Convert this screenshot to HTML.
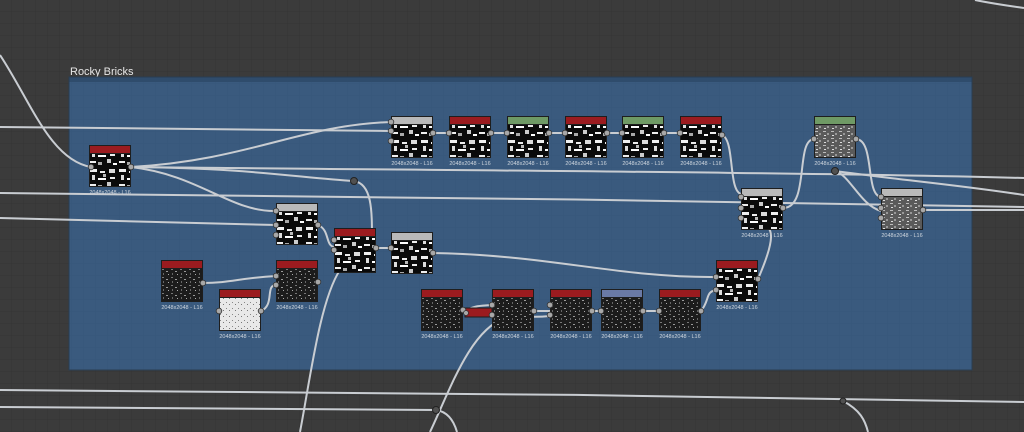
<!DOCTYPE html>
<html><head><meta charset="utf-8"><style>
html,body{margin:0;padding:0;width:1024px;height:432px;overflow:hidden;background:#3b3b3b}
svg{display:block}
text{font-family:"Liberation Sans",sans-serif}
</style></head><body>
<svg width="1024" height="432" viewBox="0 0 1024 432" xmlns="http://www.w3.org/2000/svg">
<defs>
<pattern id="grid" width="12" height="12" patternUnits="userSpaceOnUse"><path d="M12 0V12H0" fill="none" stroke="#343434" stroke-width="1"/></pattern>
<pattern id="grid2" width="12" height="12" patternUnits="userSpaceOnUse"><path d="M12 0V12H0" fill="none" stroke="#36577a" stroke-width="1"/></pattern>
<pattern id="bw" width="29" height="23" patternUnits="userSpaceOnUse"><rect width="29" height="23" fill="#0a0a0a"/><rect x="1" y="1" width="7" height="3" fill="#f0f0f0"/><rect x="11" y="3" width="5" height="2" fill="#eee"/><rect x="20" y="1" width="6" height="4" fill="#ddd"/><rect x="3" y="7" width="3" height="5" fill="#ddd"/><rect x="9" y="10" width="8" height="2" fill="#fff"/><rect x="14" y="6" width="3" height="3" fill="#bbb"/><rect x="21" y="9" width="5" height="2" fill="#eee"/><rect x="18" y="14" width="4" height="4" fill="#ccc"/><rect x="1" y="16" width="6" height="2" fill="#eee"/><rect x="9" y="17" width="4" height="3" fill="#aaa"/><rect x="24" y="18" width="4" height="2" fill="#fff"/></pattern>
<pattern id="dk" width="9" height="8" patternUnits="userSpaceOnUse"><rect width="9" height="8" fill="#1c1c1c"/><rect x="1" y="1" width="2" height="1" fill="#777"/><rect x="5" y="3" width="2" height="1" fill="#999"/><rect x="2" y="5" width="1" height="2" fill="#666"/><rect x="7" y="6" width="1" height="1" fill="#aaa"/></pattern>
<pattern id="gr" width="8" height="7" patternUnits="userSpaceOnUse"><rect width="8" height="7" fill="#5a5a5a"/><rect x="1" y="1" width="3" height="1" fill="#bbb"/><rect x="5" y="3" width="2" height="2" fill="#999"/><rect x="2" y="5" width="2" height="1" fill="#ddd"/></pattern>
<pattern id="wh" width="6" height="6" patternUnits="userSpaceOnUse"><rect width="6" height="6" fill="#e8e8e8"/><rect x="1" y="1" width="1" height="1" fill="#888"/><rect x="4" y="3" width="1" height="1" fill="#777"/></pattern>
</defs>
<rect width="1024" height="432" fill="#3b3b3b"/>
<rect width="1024" height="432" fill="url(#grid)"/>
<text x="70" y="75" font-size="11" fill="#e6e6e6">Rocky Bricks</text>
<rect x="69" y="77" width="903" height="293" fill="#3a5a7e"/>
<rect x="69" y="77" width="903" height="293" fill="url(#grid2)"/>
<rect x="69" y="77" width="903" height="5" fill="#2f4c6c"/>
<rect x="69" y="77" width="903" height="293" fill="none" stroke="#2a3d52" stroke-width="1"/>

<g fill="none" stroke="#c9cdd2" stroke-width="2">
<path d="M0 55C30 100 50 160 91 167"/>
<path d="M0 127L391 131"/>
<path d="M0 193C300 195 700 201 1024 207"/>
<path d="M0 218L276 225"/>
<path d="M131 167C250 160 300 125 391 122"/>
<path d="M131 167C400 170 800 172 1024 178"/>
<path d="M131 167C250 168 300 178 354 181C372 184 372 210 372 240"/>
<path d="M131 167C200 175 230 212 276 211"/>
<path d="M433 133H449M491 133H507M549 133H565M607 133H622M664 133H680"/>
<path d="M722 135C735 140 728 190 741 194"/>
<path d="M783 208C810 208 795 140 814 139"/>
<path d="M856 139C875 140 865 195 881 197"/>
<path d="M835 171C850 175 860 205 881 211"/>
<path d="M835 171C900 180 960 185 1024 195"/>
<path d="M923 210H1024"/>
<path d="M318 225C330 230 325 245 334 247"/>
<path d="M203 283C230 283 240 278 276 276"/>
<path d="M261 311C275 305 265 285 276 285"/>
<path d="M376 248H391"/>
<path d="M433 253C550 255 620 278 716 277"/>
<path d="M758 279C775 240 775 225 760 225"/>
<path d="M463 312C475 305 480 306 492 305"/>
<path d="M534 311H550M592 311H601M643 311H659"/>
<path d="M701 311C710 300 705 292 716 290"/>
<path d="M510 316C530 316 530 318 550 316"/>
<path d="M300 432C310 380 320 300 340 270"/>
<path d="M430 432C450 390 470 330 505 318"/>
<path d="M0 390C300 392 700 395 1024 402"/>
<path d="M0 407L436 410C450 412 455 425 457 432"/>
<path d="M843 401C860 410 865 420 868 432"/>
<path d="M975 0C995 4 1010 6 1024 8"/>
</g>
<g fill="#505050" stroke="#222" stroke-width="1">
<circle cx="354" cy="181" r="3.5"/><circle cx="835" cy="171" r="3.5"/><circle cx="436" cy="410" r="3.5"/><circle cx="843" cy="401" r="3"/>
</g>

<g font-size="5.5" fill="#cfd6de" text-anchor="middle">
<g transform="translate(89,145)"><rect width="42" height="42" fill="#1e1e1e"/><rect x="1" y="1" width="40" height="7" fill="#9b1b1f"/><rect x="1" y="9" width="40" height="32" fill="url(#bw)"/><text x="21" y="49">2048x2048 - L16</text></g>
<g transform="translate(391,116)"><rect width="42" height="42" fill="#1e1e1e"/><rect x="1" y="1" width="40" height="7" fill="#b9b9b9"/><rect x="1" y="9" width="40" height="32" fill="url(#bw)"/><text x="21" y="49">2048x2048 - L16</text></g>
<g transform="translate(449,116)"><rect width="42" height="42" fill="#1e1e1e"/><rect x="1" y="1" width="40" height="7" fill="#9b1b1f"/><rect x="1" y="9" width="40" height="32" fill="url(#bw)"/><text x="21" y="49">2048x2048 - L16</text></g>
<g transform="translate(507,116)"><rect width="42" height="42" fill="#1e1e1e"/><rect x="1" y="1" width="40" height="7" fill="#6f9a65"/><rect x="1" y="9" width="40" height="32" fill="url(#bw)"/><text x="21" y="49">2048x2048 - L16</text></g>
<g transform="translate(565,116)"><rect width="42" height="42" fill="#1e1e1e"/><rect x="1" y="1" width="40" height="7" fill="#9b1b1f"/><rect x="1" y="9" width="40" height="32" fill="url(#bw)"/><text x="21" y="49">2048x2048 - L16</text></g>
<g transform="translate(622,116)"><rect width="42" height="42" fill="#1e1e1e"/><rect x="1" y="1" width="40" height="7" fill="#6f9a65"/><rect x="1" y="9" width="40" height="32" fill="url(#bw)"/><text x="21" y="49">2048x2048 - L16</text></g>
<g transform="translate(680,116)"><rect width="42" height="42" fill="#1e1e1e"/><rect x="1" y="1" width="40" height="7" fill="#9b1b1f"/><rect x="1" y="9" width="40" height="32" fill="url(#bw)"/><text x="21" y="49">2048x2048 - L16</text></g>
<g transform="translate(814,116)"><rect width="42" height="42" fill="#1e1e1e"/><rect x="1" y="1" width="40" height="7" fill="#6f9a65"/><rect x="1" y="9" width="40" height="32" fill="url(#gr)"/><text x="21" y="49">2048x2048 - L16</text></g>
<g transform="translate(741,188)"><rect width="42" height="42" fill="#1e1e1e"/><rect x="1" y="1" width="40" height="7" fill="#b9b9b9"/><rect x="1" y="9" width="40" height="32" fill="url(#bw)"/><text x="21" y="49">2048x2048 - L16</text></g>
<g transform="translate(881,188)"><rect width="42" height="42" fill="#1e1e1e"/><rect x="1" y="1" width="40" height="7" fill="#b9b9b9"/><rect x="1" y="9" width="40" height="32" fill="url(#gr)"/><text x="21" y="49">2048x2048 - L16</text></g>
<g transform="translate(276,203)"><rect width="42" height="42" fill="#1e1e1e"/><rect x="1" y="1" width="40" height="7" fill="#b9b9b9"/><rect x="1" y="9" width="40" height="32" fill="url(#bw)"/></g>
<g transform="translate(334,228)"><rect width="42" height="45" fill="#1e1e1e"/><rect x="1" y="1" width="40" height="7" fill="#9b1b1f"/><rect x="1" y="9" width="40" height="35" fill="url(#bw)"/></g>
<g transform="translate(391,232)"><rect width="42" height="42" fill="#1e1e1e"/><rect x="1" y="1" width="40" height="7" fill="#b9b9b9"/><rect x="1" y="9" width="40" height="32" fill="url(#bw)"/></g>
<g transform="translate(161,260)"><rect width="42" height="42" fill="#1e1e1e"/><rect x="1" y="1" width="40" height="7" fill="#9b1b1f"/><rect x="1" y="9" width="40" height="32" fill="url(#dk)"/><text x="21" y="49">2048x2048 - L16</text></g>
<g transform="translate(219,289)"><rect width="42" height="42" fill="#1e1e1e"/><rect x="1" y="1" width="40" height="7" fill="#9b1b1f"/><rect x="1" y="9" width="40" height="32" fill="url(#wh)"/><text x="21" y="49">2048x2048 - L16</text></g>
<g transform="translate(276,260)"><rect width="42" height="42" fill="#1e1e1e"/><rect x="1" y="1" width="40" height="7" fill="#9b1b1f"/><rect x="1" y="9" width="40" height="32" fill="url(#dk)"/><text x="21" y="49">2048x2048 - L16</text></g>
<g transform="translate(716,260)"><rect width="42" height="42" fill="#1e1e1e"/><rect x="1" y="1" width="40" height="7" fill="#9b1b1f"/><rect x="1" y="9" width="40" height="32" fill="url(#bw)"/><text x="21" y="49">2048x2048 - L16</text></g>
<g transform="translate(421,289)"><rect width="42" height="42" fill="#1e1e1e"/><rect x="1" y="1" width="40" height="7" fill="#9b1b1f"/><rect x="1" y="9" width="40" height="32" fill="url(#dk)"/><text x="21" y="49">2048x2048 - L16</text></g>
<g transform="translate(465,308)"><rect width="27" height="9" fill="#9b1b1f" stroke="#1e1e1e"/></g>
<g transform="translate(492,289)"><rect width="42" height="42" fill="#1e1e1e"/><rect x="1" y="1" width="40" height="7" fill="#9b1b1f"/><rect x="1" y="9" width="40" height="32" fill="url(#dk)"/><text x="21" y="49">2048x2048 - L16</text></g>
<g transform="translate(550,289)"><rect width="42" height="42" fill="#1e1e1e"/><rect x="1" y="1" width="40" height="7" fill="#9b1b1f"/><rect x="1" y="9" width="40" height="32" fill="url(#dk)"/><text x="21" y="49">2048x2048 - L16</text></g>
<g transform="translate(601,289)"><rect width="42" height="42" fill="#1e1e1e"/><rect x="1" y="1" width="40" height="7" fill="#6a7aa6"/><rect x="1" y="9" width="40" height="32" fill="url(#dk)"/><text x="21" y="49">2048x2048 - L16</text></g>
<g transform="translate(659,289)"><rect width="42" height="42" fill="#1e1e1e"/><rect x="1" y="1" width="40" height="7" fill="#9b1b1f"/><rect x="1" y="9" width="40" height="32" fill="url(#dk)"/><text x="21" y="49">2048x2048 - L16</text></g>
</g>
<g fill="#a8a8a8" stroke="#333" stroke-width="0.8">
<circle cx="91" cy="167" r="2.8"/><circle cx="131" cy="167" r="2.8"/>
<circle cx="391" cy="122" r="2.8"/><circle cx="391" cy="131" r="2.8"/><circle cx="391" cy="141" r="2.8"/><circle cx="433" cy="133" r="2.8"/>
<circle cx="449" cy="133" r="2.8"/><circle cx="491" cy="133" r="2.8"/><circle cx="507" cy="133" r="2.8"/><circle cx="549" cy="133" r="2.8"/>
<circle cx="565" cy="133" r="2.8"/><circle cx="607" cy="133" r="2.8"/><circle cx="622" cy="133" r="2.8"/><circle cx="664" cy="133" r="2.8"/>
<circle cx="680" cy="133" r="2.8"/><circle cx="722" cy="135" r="2.8"/>
<circle cx="814" cy="139" r="2.8"/><circle cx="856" cy="139" r="2.8"/>
<circle cx="741" cy="197" r="2.8"/><circle cx="741" cy="208" r="2.8"/><circle cx="741" cy="218" r="2.8"/><circle cx="783" cy="208" r="2.8"/>
<circle cx="881" cy="197" r="2.8"/><circle cx="881" cy="208" r="2.8"/><circle cx="881" cy="218" r="2.8"/><circle cx="923" cy="210" r="2.8"/>
<circle cx="276" cy="211" r="2.8"/><circle cx="276" cy="225" r="2.8"/><circle cx="276" cy="235" r="2.8"/><circle cx="318" cy="225" r="2.8"/>
<circle cx="334" cy="240" r="2.8"/><circle cx="334" cy="250" r="2.8"/><circle cx="376" cy="248" r="2.8"/>
<circle cx="391" cy="248" r="2.8"/><circle cx="433" cy="253" r="2.8"/>
<circle cx="203" cy="283" r="2.8"/><circle cx="219" cy="311" r="2.8"/><circle cx="261" cy="311" r="2.8"/>
<circle cx="276" cy="276" r="2.8"/><circle cx="276" cy="285" r="2.8"/><circle cx="318" cy="282" r="2.8"/>
<circle cx="716" cy="277" r="2.8"/><circle cx="716" cy="290" r="2.8"/><circle cx="758" cy="279" r="2.8"/>
<circle cx="463" cy="310" r="2.8"/><circle cx="466" cy="313" r="2.5"/>
<circle cx="492" cy="305" r="2.8"/><circle cx="492" cy="315" r="2.8"/><circle cx="534" cy="311" r="2.8"/>
<circle cx="550" cy="305" r="2.8"/><circle cx="550" cy="315" r="2.8"/><circle cx="592" cy="311" r="2.8"/>
<circle cx="601" cy="311" r="2.8"/><circle cx="643" cy="311" r="2.8"/>
<circle cx="659" cy="311" r="2.8"/><circle cx="701" cy="311" r="2.8"/>
</g>
</svg>
</body></html>
